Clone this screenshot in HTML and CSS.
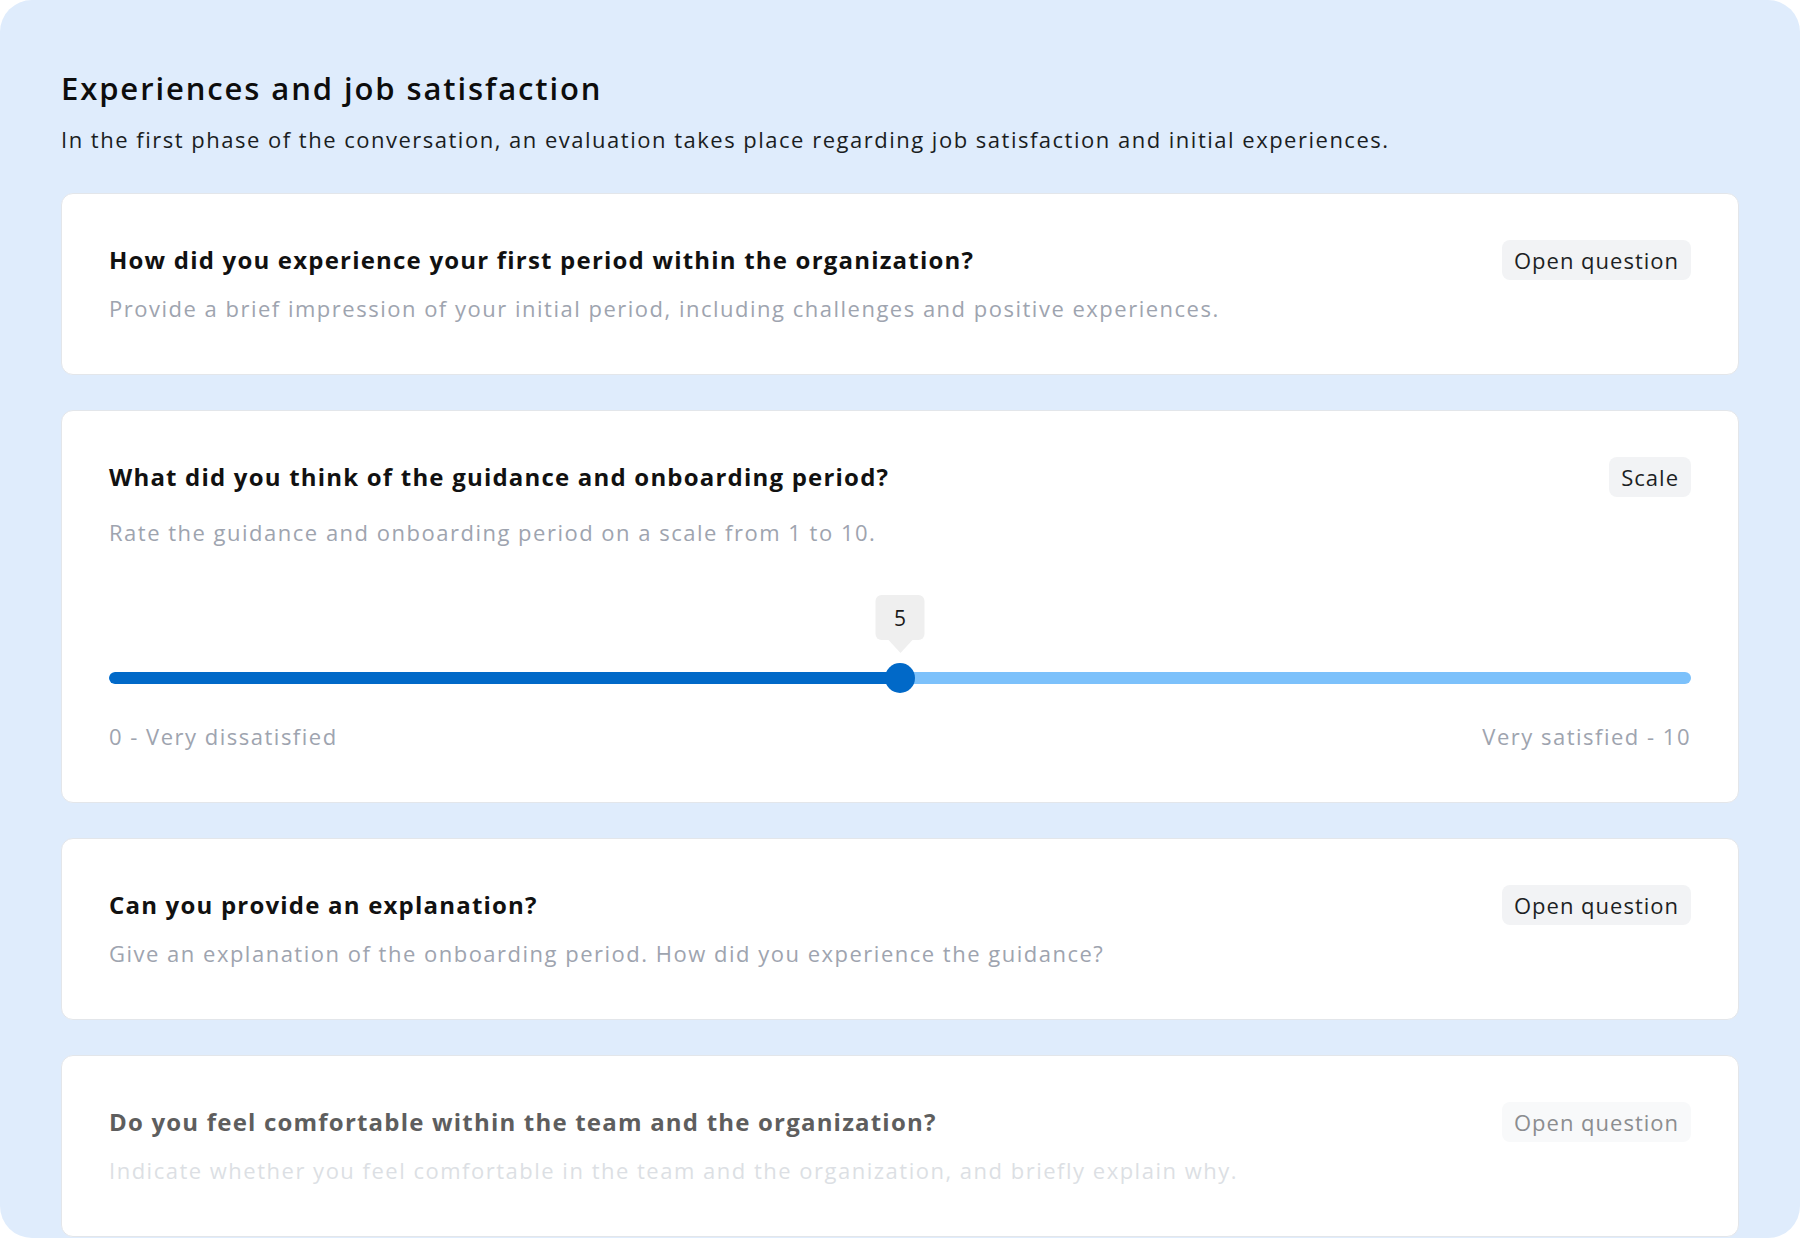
FILE: index.html
```html
<!DOCTYPE html>
<html lang="en">
<head>
<meta charset="utf-8">
<title>Experiences and job satisfaction</title>
<link rel="stylesheet" href="styles.css">
</head>
<body>
<main class="panel">
  <header class="section-head">
    <h1 class="section-title">Experiences and job satisfaction</h1>
    <p class="section-sub">In the first phase of the conversation, an evaluation takes place regarding job satisfaction and initial experiences.</p>
  </header>

  <div class="cards">
    <section class="card">
      <div class="card-head">
        <h2 class="q-title">How did you experience your first period within the organization?</h2>
        <span class="badge">Open question</span>
      </div>
      <p class="q-desc">Provide a brief impression of your initial period, including challenges and positive experiences.</p>
    </section>

    <section class="card">
      <div class="card-head">
        <h2 class="q-title">What did you think of the guidance and onboarding period?</h2>
        <span class="badge">Scale</span>
      </div>
      <p class="q-desc q-desc--wide">Rate the guidance and onboarding period on a scale from 1 to 10.</p>
      <div class="slider">
        <div class="slider-tip-row">
          <span class="slider-tip" style="left: 50%">5</span>
        </div>
        <div class="slider-rail">
          <div class="slider-track">
            <div class="slider-fill" style="width: 50%"></div>
          </div>
          <span class="slider-thumb" style="left: 50%"></span>
        </div>
        <div class="slider-labels">
          <span>0 - Very dissatisfied</span>
          <span>Very satisfied - 10</span>
        </div>
      </div>
    </section>

    <section class="card">
      <div class="card-head">
        <h2 class="q-title">Can you provide an explanation?</h2>
        <span class="badge">Open question</span>
      </div>
      <p class="q-desc">Give an explanation of the onboarding period. How did you experience the guidance?</p>
    </section>

    <section class="card card--faded">
      <div class="card-head">
        <h2 class="q-title">Do you feel comfortable within the team and the organization?</h2>
        <span class="badge">Open question</span>
      </div>
      <p class="q-desc">Indicate whether you feel comfortable in the team and the organization, and briefly explain why.</p>
    </section>
  </div>
</main>
</body>
</html>
```

FILE: styles.css
```css
* {
  box-sizing: border-box;
}

html, body {
  margin: 0;
  padding: 0;
  background: #ffffff;
}

body {
  font-family: "Open Sans", "Noto Sans", "Liberation Sans", sans-serif;
  color: #111111;
}

.panel {
  height: 1238px;
  overflow: hidden;
  background: #dfecfc;
  border-radius: 32px;
  padding: 68px 61px 0 61px;
}

.section-head {
  margin: 0 0 39px 0;
}

.section-title {
  margin: 0;
  font-size: 31px;
  line-height: 40px;
  font-weight: 600;
  letter-spacing: 1.9px;
  color: #0d0d0d;
}

.section-sub {
  margin: 16px 0 0 0;
  font-size: 22px;
  line-height: 30px;
  letter-spacing: 1.5px;
  color: #1a1d22;
}

.cards {
  display: flex;
  flex-direction: column;
  gap: 35px;
}

.card {
  background: #ffffff;
  border: 1px solid #e3e6ea;
  border-radius: 12px;
  padding: 46px 47px 51px 47px;
}

.card-head {
  display: flex;
  align-items: center;
  justify-content: space-between;
  gap: 24px;
}

.q-title {
  margin: 0;
  font-size: 24px;
  line-height: 32px;
  font-weight: 700;
  letter-spacing: 1.2px;
  color: #111111;
}

.badge {
  flex: none;
  background: #f2f3f5;
  border-radius: 8px;
  height: 40px;
  padding: 0 12px;
  display: flex;
  align-items: center;
  font-size: 22px;
  letter-spacing: 1px;
  color: #1c1f24;
}

.q-desc {
  margin: 13px 0 0 0;
  font-size: 22px;
  line-height: 30px;
  letter-spacing: 1.5px;
  color: #9ea4af;
}

.q-desc--wide {
  margin-top: 20px;
}

/* slider */
.slider {
  margin-top: 48px;
}

.slider-tip-row {
  position: relative;
  height: 68px;
}

.slider-tip {
  position: absolute;
  top: 0;
  transform: translateX(-50%);
  width: 49px;
  height: 45px;
  background: #efefef;
  border-radius: 6px;
  display: flex;
  align-items: center;
  justify-content: center;
  font-size: 21px;
  color: #1a1a1a;
}

.slider-tip::after {
  content: "";
  position: absolute;
  left: 50%;
  top: 45px;
  transform: translateX(-50%);
  border-left: 12px solid transparent;
  border-right: 12px solid transparent;
  border-top: 13px solid #efefef;
}

.slider-rail {
  position: relative;
  height: 30px;
  display: flex;
  align-items: center;
}

.slider-track {
  width: 100%;
  height: 12px;
  border-radius: 6px;
  background: #7cc1fb;
  overflow: hidden;
}

.slider-fill {
  height: 100%;
  background: #0169c8;
  border-radius: 6px 0 0 6px;
}

.slider-thumb {
  position: absolute;
  top: 0;
  width: 30px;
  height: 30px;
  border-radius: 50%;
  background: #0169c8;
  transform: translateX(-50%);
}

.slider-labels {
  margin-top: 28px;
  display: flex;
  justify-content: space-between;
  font-size: 22px;
  line-height: 30px;
  letter-spacing: 1.5px;
  color: #9ea4af;
}

/* faded last card */
.card--faded .q-title {
  color: #5e5e5e;
}

.card--faded .q-desc {
  color: #dcdfe4;
}

.card--faded .badge {
  background: #f8f9fa;
  color: #8b8d90;
}
```
